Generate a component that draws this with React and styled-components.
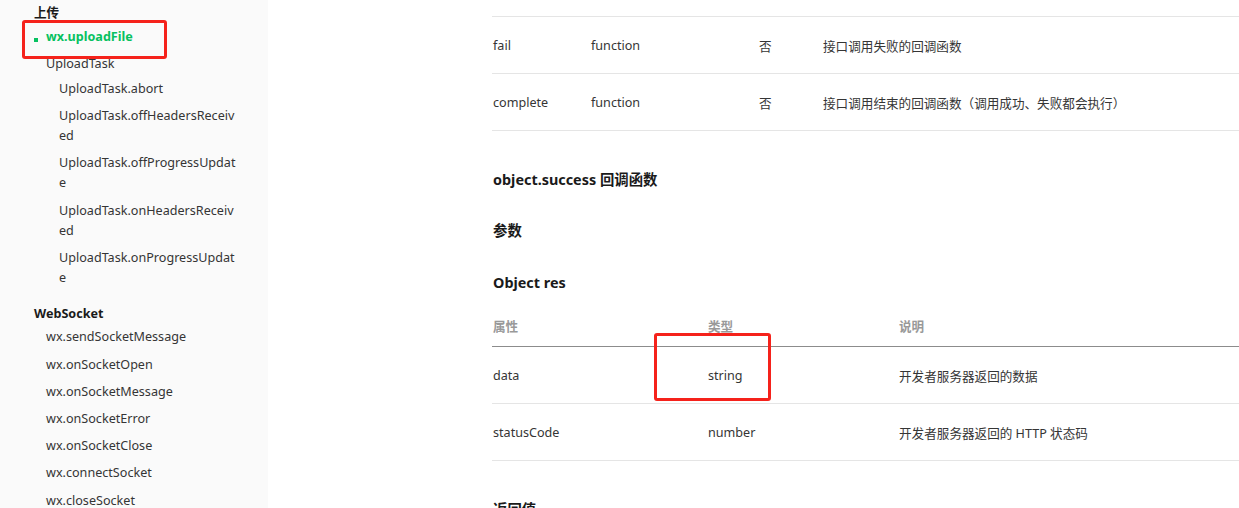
import React from 'react'
import styled, { createGlobalStyle } from 'styled-components'

const Global = createGlobalStyle`
  html, body {
    margin: 0;
    padding: 0;
    height: 508px;
    overflow: hidden;
    background: #fff;
  }
  body {
    font-family: "Noto Sans", "Noto Sans CJK SC", sans-serif;
    font-size: 12.6px;
    color: #353535;
  }
`

const Page = styled.div`
  position: relative;
  display: flex;
  height: 508px;
  overflow: hidden;
`

const Sidebar = styled.aside`
  width: 268px;
  flex-shrink: 0;
  background: #fafafa;
  padding: 3px 0 0 0;
  box-sizing: border-box;
`

const GroupTitle = styled.div`
  padding-left: 34px;
  line-height: 20px;
  font-weight: bold;
  color: #1a1a1a;
  margin-top: ${p => p.$gap || 0}px;
`

const NavItem = styled.div`
  position: relative;
  padding: 3.6px 30px 3.6px ${p => p.$indent}px;
  line-height: 20px;
  word-break: break-all;
  color: ${p => (p.$active ? '#07c160' : '#353535')};
  font-weight: ${p => (p.$active ? 'bold' : 'normal')};
  margin-top: ${p => p.$gap || 0}px;

  &::before {
    content: '';
    display: ${p => (p.$active ? 'block' : 'none')};
    position: absolute;
    left: 34px;
    top: 15px;
    width: 4px;
    height: 4px;
    background: #07c160;
  }
`

const Main = styled.main`
  flex: 1;
  padding: 16px 0 0 224px;
  min-width: 0;
`

const Table = styled.div`
  border-top: ${p => (p.$top ? '1px solid #e5e5e5' : 'none')};
  margin-top: ${p => p.$gap || 0}px;
`

const Row = styled.div`
  display: grid;
  grid-template-columns: ${p => p.$cols};
  align-items: center;
  height: 56px;
  border-bottom: 1px solid #e5e5e5;
`

const HeadRow = styled.div`
  display: grid;
  grid-template-columns: ${p => p.$cols};
  padding: 9px 0 9px;
  line-height: 20px;
  border-bottom: 1px solid #8c8c8c;
  color: #999;
  font-weight: bold;
`

const Cell = styled.div`
  padding-left: 1px;
  white-space: nowrap;
`

const Heading = styled.h4`
  margin: ${p => p.$top}px 0 0 0;
  padding-left: 1px;
  font-size: 14.4px;
  line-height: 20px;
  font-weight: bold;
  color: #1a1a1a;
`

const Mark = styled.div`
  position: absolute;
  border: 3px solid #f5221b;
  border-radius: 3px;
  box-sizing: border-box;
  pointer-events: none;
`

const cols1 = '98px 168px 64px 1fr'
const cols2 = '215px 191px 1fr'

const uploadTasks = [
  'UploadTask.abort',
  'UploadTask.offHeadersReceived',
  'UploadTask.offProgressUpdate',
  'UploadTask.onHeadersReceived',
  'UploadTask.onProgressUpdate',
]

const sockets = [
  'wx.sendSocketMessage',
  'wx.onSocketOpen',
  'wx.onSocketMessage',
  'wx.onSocketError',
  'wx.onSocketClose',
  'wx.connectSocket',
  'wx.closeSocket',
]

const cbRows = [
  ['fail', 'function', '否', '接口调用失败的回调函数'],
  ['complete', 'function', '否', '接口调用结束的回调函数（调用成功、失败都会执行）'],
]

const resRows = [
  ['data', 'string', '开发者服务器返回的数据'],
  ['statusCode', 'number', '开发者服务器返回的 HTTP 状态码'],
]

export default function App() {
  return (
    <Page>
      <Global />
      <Sidebar>
        <GroupTitle>上传</GroupTitle>
        <NavItem $indent={46} $active>wx.uploadFile</NavItem>
        <NavItem $indent={46}>UploadTask</NavItem>
        {uploadTasks.map((t, i) => (
          <NavItem key={t} $indent={59} $gap={i === 0 ? -2 : 0}>{t}</NavItem>
        ))}
        <GroupTitle $gap={12.5}>WebSocket</GroupTitle>
        {sockets.map(s => (
          <NavItem key={s} $indent={46}>{s}</NavItem>
        ))}
      </Sidebar>

      <Main>
        <Table $top>
          {cbRows.map(r => (
            <Row key={r[0]} $cols={cols1}>
              {r.map((c, i) => <Cell key={i}>{c}</Cell>)}
            </Row>
          ))}
        </Table>

        <Heading $top={39}>object.success 回调函数</Heading>
        <Heading $top={31}>参数</Heading>
        <Heading $top={32}>Object res</Heading>

        <Table $gap={15}>
          <HeadRow $cols={cols2}>
            <Cell>属性</Cell>
            <Cell>类型</Cell>
            <Cell>说明</Cell>
          </HeadRow>
          {resRows.map(r => (
            <Row key={r[0]} $cols={cols2}>
              {r.map((c, i) => <Cell key={i}>{c}</Cell>)}
            </Row>
          ))}
        </Table>

        <Heading $top={39}>返回值</Heading>
      </Main>

      <Mark style={{ left: 22, top: 20, width: 145, height: 39 }} />
      <Mark style={{ left: 654, top: 333, width: 117, height: 68 }} />
    </Page>
  )
}
